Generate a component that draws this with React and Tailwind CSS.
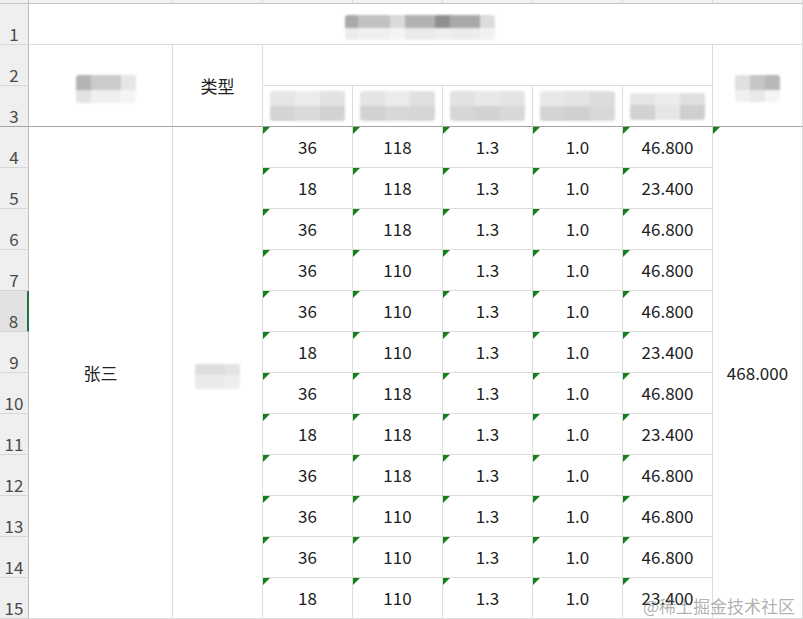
import React from 'react';

const data = [
  ['36', '118', '1.3', '1.0', '46.800'],
  ['18', '118', '1.3', '1.0', '23.400'],
  ['36', '118', '1.3', '1.0', '46.800'],
  ['36', '110', '1.3', '1.0', '46.800'],
  ['36', '110', '1.3', '1.0', '46.800'],
  ['18', '110', '1.3', '1.0', '23.400'],
  ['36', '118', '1.3', '1.0', '46.800'],
  ['18', '118', '1.3', '1.0', '23.400'],
  ['36', '118', '1.3', '1.0', '46.800'],
  ['36', '110', '1.3', '1.0', '46.800'],
  ['36', '110', '1.3', '1.0', '46.800'],
  ['18', '110', '1.3', '1.0', '23.400'],
];

// blurred (mosaic) text placeholders
const titleMosaic = [
  ['h-[13px]', ['w-[13px] bg-[#a9a9a9]', 'w-[32px] bg-[#c2c2c2]', 'w-[15px] bg-[#dadada]', 'w-[30px] bg-[#b2b2b2]', 'w-[15px] bg-[#8f8f8f]', 'w-[30px] bg-[#a9a9a9]', 'w-[15px] bg-[#dcdcdc]']],
  ['h-[12px]', ['w-[13px] bg-[#ececec]', 'w-[32px] bg-[#f0f0f0]', 'w-[15px] bg-[#f4f4f4]', 'w-[30px] bg-[#eaeaea]', 'w-[15px] bg-[#efefef]', 'w-[30px] bg-[#ececec]', 'w-[15px] bg-[#f2f2f2]']],
];

const nameMosaic = [
  ['h-[15px]', ['w-[15px] bg-[#b4b4b4]', 'w-[30px] bg-[#cbcbcb]', 'w-[15px] bg-[#e6e6e6]']],
  ['h-[13px]', ['w-[15px] bg-[#e2e2e2]', 'w-[30px] bg-[#f0f0f0]', 'w-[15px] bg-[#f4f4f4]']],
];

const totalMosaic = [
  ['h-[15px]', ['w-[15px] bg-[#e0e0e0]', 'w-[15px] bg-[#c6c6c6]', 'w-[15px] bg-[#b8b8b8]']],
  ['h-[12px]', ['w-[15px] bg-[#f0f0f0]', 'w-[15px] bg-[#e8e8e8]', 'w-[15px] bg-[#f4f4f4]']],
];

const subMosaics = [
  [
    ['h-[15px]', ['w-[25px] bg-[#e6e6e6]', 'w-[25px] bg-[#ececec]', 'w-[25px] bg-[#e2e2e2]']],
    ['h-[15px]', ['w-[25px] bg-[#d4d4d4]', 'w-[25px] bg-[#dadada]', 'w-[25px] bg-[#d2d2d2]']],
  ],
  [
    ['h-[15px]', ['w-[25px] bg-[#e4e4e4]', 'w-[25px] bg-[#ebebeb]', 'w-[25px] bg-[#e0e0e0]']],
    ['h-[15px]', ['w-[25px] bg-[#d2d2d2]', 'w-[25px] bg-[#d8d8d8]', 'w-[25px] bg-[#d6d6d6]']],
  ],
  [
    ['h-[15px]', ['w-[25px] bg-[#e2e2e2]', 'w-[25px] bg-[#e8e8e8]', 'w-[25px] bg-[#e4e4e4]']],
    ['h-[15px]', ['w-[25px] bg-[#d6d6d6]', 'w-[25px] bg-[#d2d2d2]', 'w-[25px] bg-[#d8d8d8]']],
  ],
  [
    ['h-[15px]', ['w-[25px] bg-[#e8e8e8]', 'w-[25px] bg-[#e4e4e4]', 'w-[25px] bg-[#dcdcdc]']],
    ['h-[15px]', ['w-[25px] bg-[#d4d4d4]', 'w-[25px] bg-[#d0d0d0]', 'w-[25px] bg-[#d8d8d8]']],
  ],
  [
    ['h-[12px]', ['w-[25px] bg-[#e6e6e6]', 'w-[25px] bg-[#ececec]', 'w-[25px] bg-[#e0e0e0]']],
    ['h-[15px]', ['w-[25px] bg-[#d2d2d2]', 'w-[25px] bg-[#e6e6e6]', 'w-[25px] bg-[#cfcfcf]']],
  ],
];

const typeMosaic = [
  ['h-[11px]', ['w-[30px] bg-[#dedede]', 'w-[15px] bg-[#e4e4e4]']],
  ['h-[14px]', ['w-[30px] bg-[#ebebeb]', 'w-[15px] bg-[#eeeeee]']],
];

function Mosaic({ rows, className = '' }) {
  return (
    <div className={'flex flex-col overflow-hidden rounded-[3px] blur-[1px] ' + className}>
      {rows.map(([h, cells], i) => (
        <div key={i} className={'flex ' + h}>
          {cells.map((c, j) => (
            <div key={j} className={c} />
          ))}
        </div>
      ))}
    </div>
  );
}

function Tri() {
  return <span className="absolute left-0 top-0 h-0 w-0 border-r-[7px] border-t-[7px] border-r-transparent border-t-[#13801b]" />;
}

const cell = 'relative flex items-center justify-center border-b border-r border-[#dcdcdc] bg-white';
const frozen = 'relative flex items-center justify-center border-b border-r border-[#dcdcdc] border-b-[#a3a3a3] bg-white';

function RowHead({ n }) {
  if (n === 8) {
    return (
      <div className="flex items-end justify-center border-b border-r-2 border-b-[#d6d6d6] border-r-[#217346] bg-[#e1e1e1] pb-[2px] text-[17px] leading-none text-[#4a4a4a]">
        {n}
      </div>
    );
  }
  if (n === 3) {
    return (
      <div className="flex items-end justify-center border-b border-r border-b-[#a3a3a3] border-r-[#bdbdbd] bg-[#efefef] pb-[2px] text-[17px] leading-none text-[#4a4a4a]">
        {n}
      </div>
    );
  }
  return (
    <div className="flex items-end justify-center border-b border-r border-b-[#d6d6d6] border-r-[#bdbdbd] bg-[#efefef] pb-[2px] text-[17px] leading-none text-[#4a4a4a]">
      {n}
    </div>
  );
}

export default function App() {
  return (
    <div className="relative h-[619px] w-[803px] overflow-hidden bg-white font-['Noto_Sans_CJK_SC','Noto_Sans',sans-serif] text-[17px] text-[#222]">
      <div className="grid grid-cols-[29px_144px_90px_90px_90px_90px_90px_90px_90px] grid-rows-[4px_repeat(15,41px)]">
        {/* column header strip */}
        <div className="border-b border-r border-b-[#c4c4c4] border-r-[#bdbdbd] bg-[#efefef]" />
        {[0, 1, 2, 3, 4, 5, 6, 7].map((i) => (
          <div key={i} className="border-b border-r border-b-[#c4c4c4] border-r-[#d8d8d8] bg-[#f3f3f3]" />
        ))}

        {/* row 1 */}
        <RowHead n={1} />
        <div className={cell + ' col-span-8'}>
          <Mosaic rows={titleMosaic} className="ml-[8px] mt-[7px]" />
        </div>

        {/* row 2 */}
        <RowHead n={2} />
        <div className={frozen + ' row-span-2'}>
          <Mosaic rows={nameMosaic} className="ml-[10px] mt-[6px]" />
        </div>
        <div className={frozen + ' row-span-2'}>类型</div>
        <div className={cell + ' col-span-5'} />
        <div className={frozen + ' row-span-2'}>
          <Mosaic rows={totalMosaic} className="mt-[6px]" />
        </div>

        {/* row 3 */}
        <RowHead n={3} />
        {subMosaics.map((m, i) => (
          <div key={i} className={frozen}>
            <Mosaic rows={m} />
          </div>
        ))}

        {/* data rows */}
        {data.map((r, i) => (
          <React.Fragment key={i}>
            <RowHead n={i + 4} />
            {i === 0 && (
              <>
                <div className={cell + ' row-span-12'}>张三</div>
                <div className={cell + ' row-span-12'}>
                  <Mosaic rows={typeMosaic} className="mt-[7px]" />
                </div>
              </>
            )}
            {r.map((v, j) => (
              <div key={j} className={cell}>
                <Tri />
                {v}
              </div>
            ))}
            {i === 0 && (
              <div className={cell + ' row-span-12'}>
                <Tri />
                468.000
              </div>
            )}
          </React.Fragment>
        ))}
      </div>

      <div className="absolute bottom-[5px] right-[8px] text-[17px] leading-none text-[rgba(110,110,110,0.55)]">
        @稀土掘金技术社区
      </div>
    </div>
  );
}
